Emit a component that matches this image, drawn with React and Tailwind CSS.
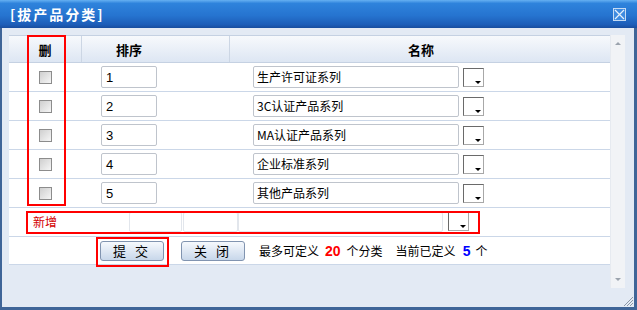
import React from 'react';

const rows = [
  { order: '1', name: '生产许可证系列' },
  { order: '2', name: '3C认证产品系列' },
  { order: '3', name: 'MA认证产品系列' },
  { order: '4', name: '企业标准系列' },
  { order: '5', name: '其他产品系列' },
];

const ColorPicker = () => (
  <span className="relative inline-block w-[21px] h-[19px] border border-t-[#6a6a6a] border-l-[#6a6a6a] border-r-[#a8a8a8] border-b-[#a8a8a8] bg-white">
    <span className="absolute right-[2px] bottom-[2px] w-0 h-0 border-l-[3px] border-r-[3px] border-t-[3px] border-l-transparent border-r-transparent border-t-black" />
  </span>
);

const Checkbox = () => (
  <span className="inline-block w-[13px] h-[13px] border border-[#8c8c8c] bg-gradient-to-br from-[#cfcfcf] to-[#f6f6f6]" />
);

const Button = ({ label }) => (
  <button className="w-[64px] h-[20px] rounded-[3px] border border-[#8194b0] bg-gradient-to-b from-[#f6f9fd] to-[#c8d7ea] text-[13px] leading-none tracking-[3px] text-black">
    {label}
  </button>
);

export default function App() {
  return (
    <div className="relative w-[637px] h-[310px] flex flex-col overflow-hidden font-['Noto_Sans_CJK_SC','Liberation_Sans',sans-serif] text-black">
      {/* title bar */}
      <div className="h-[28px] flex items-center justify-between pl-[10px] pr-[11px] bg-[linear-gradient(to_bottom,#66b0f2_0%,#2e83dc_12%,#2674d0_55%,#1d5db8_88%,#184d9e_100%)]">
        <span className="text-white text-[14px] font-bold tracking-[2px] leading-none">[拔产品分类]</span>
        <span className="w-[13px] h-[13px] border border-[#c6dbf3] bg-[#3f8be0] flex items-center justify-center">
          <svg width="11" height="11" viewBox="0 0 11 11">
            <path d="M1 1L10 10M10 1L1 10" stroke="#e6f0fb" strokeWidth="1.2" />
          </svg>
        </span>
      </div>

      {/* body */}
      <div className="flex-1 flex flex-col bg-[#e3eaf4] border-l-2 border-r-[3px] border-b-[3px] border-[#3f6598] pt-[7px] pl-[7px]">
        <div className="flex h-[253px]">
          <div className="w-[601px] flex flex-col">
            {/* header */}
            <div className="h-[28px] flex border-y border-[#c5d1e2] bg-gradient-to-b from-[#f7f9fc] to-[#dde6f3] text-[13px] font-bold leading-none">
              <div className="w-[73px] flex items-center justify-center border-r border-[#ccd6e4]">删</div>
              <div className="w-[148px] flex items-center pl-[34px] border-r border-[#ccd6e4]">排序</div>
              <div className="flex-1 flex items-center pl-[178px]">名称</div>
            </div>

            {rows.map((r) => (
              <div key={r.order} className="h-[29px] flex items-center bg-white border-b border-[#cbd7e8] text-[12px] leading-none">
                <div className="w-[73px] flex justify-center">
                  <Checkbox />
                </div>
                <div className="w-[148px] pl-[19px]">
                  <div className="w-[56px] h-[22px] flex items-center pl-[4px] border border-[#bfc4cc] rounded-[2px] font-['Liberation_Sans',sans-serif] text-[13px]">
                    {r.order}
                  </div>
                </div>
                <div className="flex items-center gap-[4px] pl-[23px]">
                  <div className="w-[206px] h-[22px] flex items-center pl-[3px] border border-[#bfc4cc] rounded-[2px]">
                    {r.name}
                  </div>
                  <span className="mt-[2px]">
                    <ColorPicker />
                  </span>
                </div>
              </div>
            ))}

            {/* add row */}
            <div className="h-[29px] flex items-center bg-white border-b border-[#cbd7e8] text-[12px] leading-none">
              <span className="pl-[24px] w-[120px] text-[#d40000]">新增</span>
              <span className="w-[53px] h-[20px] border border-[#e2e6ec] rounded-[2px]" />
              <span className="w-[55px] h-[20px] ml-[1px] border border-[#e2e6ec] rounded-[2px]" />
              <span className="w-[205px] h-[20px] border border-[#e2e6ec] rounded-[2px]" />
              <span className="ml-[5px]">
                <ColorPicker />
              </span>
            </div>

            {/* buttons */}
            <div className="h-[28px] flex items-center bg-white border-b border-[#cbd7e8] text-[12px] leading-none">
              <span className="ml-[91px]">
                <Button label="提 交" />
              </span>
              <span className="ml-[17px]">
                <Button label="关 闭" />
              </span>
              <span className="ml-[14px]">最多可定义</span>
              <b className="ml-[6px] text-[#ff0000] font-['Liberation_Sans',sans-serif] text-[14px]">20</b>
              <span className="ml-[6px]">个分类</span>
              <span className="ml-[13px]">当前已定义</span>
              <b className="ml-[7px] text-[#0000ff] font-['Liberation_Sans',sans-serif] text-[14px]">5</b>
              <span className="ml-[5px]">个</span>
            </div>
          </div>

          {/* scrollbar */}
          <div className="w-[15px] flex flex-col items-center justify-between py-[7px] bg-[#f1f3f6] border-l border-[#e6eaf0]">
            <span className="w-0 h-0 border-l-[3px] border-r-[3px] border-b-[3px] border-l-transparent border-r-transparent border-b-[#9ba3ad]" />
            <span className="w-0 h-0 border-l-[3px] border-r-[3px] border-t-[3px] border-l-transparent border-r-transparent border-t-[#9ba3ad]" />
          </div>
        </div>
      </div>

      {/* resize grip */}
      <svg className="absolute right-[3px] bottom-[3px]" width="11" height="11" viewBox="0 0 11 11">
        <path d="M10 1L1 10M10 4L4 10M10 7L7 10" stroke="#8a96a6" strokeWidth="1" />
      </svg>

      {/* red annotation boxes */}
      <div className="absolute left-[27px] top-[35px] w-[39px] h-[171px] border-2 border-[#ff0000]" />
      <div className="absolute left-[26px] top-[211px] w-[454px] h-[23px] border-2 border-[#ff0000]" />
      <div className="absolute left-[96px] top-[237px] w-[73px] h-[30px] border-2 border-[#ff0000]" />
    </div>
  );
}
